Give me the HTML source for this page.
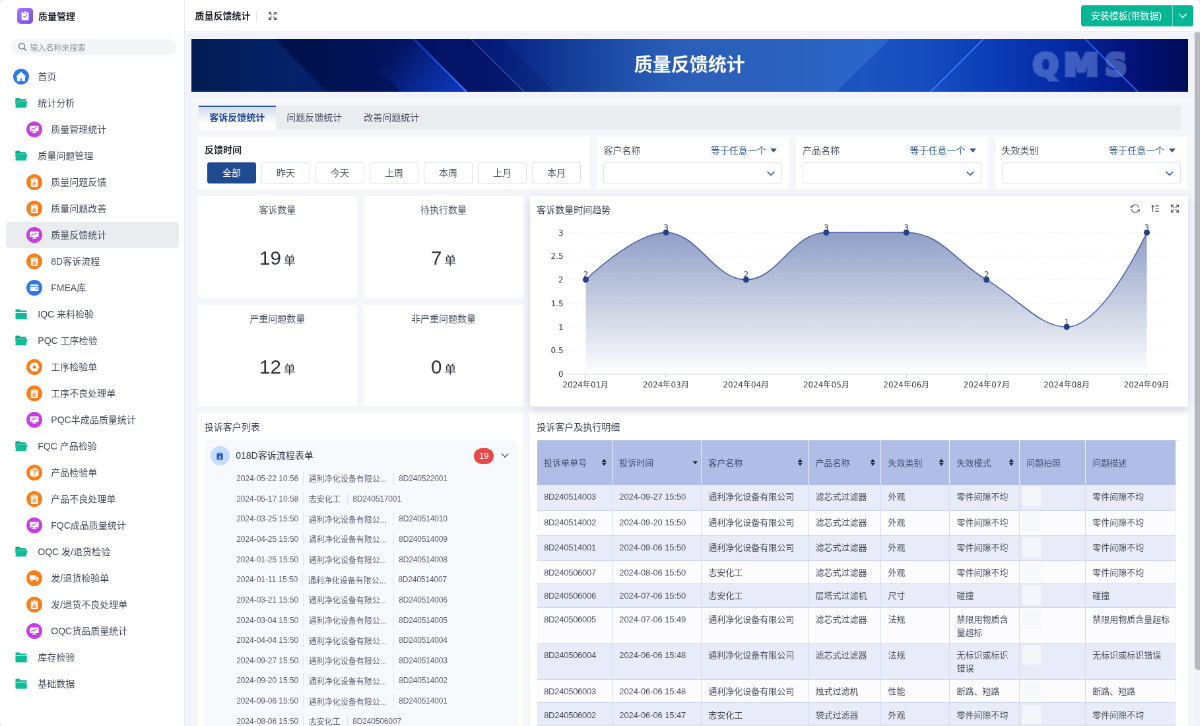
<!DOCTYPE html>
<html lang="zh-CN"><head><meta charset="utf-8"><title>质量反馈统计</title>
<style>
*{box-sizing:border-box;margin:0;padding:0}
html,body{width:1200px;height:726px;overflow:hidden;background:#efefef}
body{font-family:"Liberation Sans","Noto Sans CJK SC",sans-serif;color:#333a47;font-size:14px}
#app{position:absolute;left:0;top:0;width:1818.18px;height:1100px;transform:scale(.66);transform-origin:0 0;overflow:hidden;background:#fff;will-change:transform;border-radius:9px}
i,em{font-style:normal}
/* sidebar */
#side{position:absolute;left:0;top:0;width:280px;height:1100px;background:#fff;border-right:1px solid #e9ebf0}
.logo{position:absolute;left:26px;top:12px;height:24px;display:flex;align-items:center}
.logo .lg{width:24px;height:24px;border-radius:5px;background:linear-gradient(135deg,#a97bf5,#7a4be8);display:block;margin-right:8px}
.logo b{font-size:14px;color:#1f2329;letter-spacing:0}
.search{position:absolute;left:16.5px;top:59px;width:250px;height:24px;border-radius:12px;background:#f4f5f7;display:flex;align-items:center;padding-left:10px;font-size:12px;color:#8d929c}
.search svg{margin-right:5px}
.menu{position:absolute;left:8.5px;top:96px;width:262.5px}
.mi{height:40px;display:flex;align-items:center;padding-left:11.5px;border-radius:5px;color:#434a58;font-size:14px}
.mi.l1{padding-left:31.5px}
.mi.cur{background:#eaecf0}
.mi>span:last-child{margin-left:13.3px;position:relative;top:-1.2px}
.ci{width:24px;height:24px;border-radius:50%;display:block;flex:none}
.ci svg{display:block}
.fi{width:24px;height:24px;display:flex;align-items:center;justify-content:center;flex:none}
/* top */
#top{position:absolute;left:280px;top:0;right:0;height:48px;background:#fff;border-bottom:1px solid #eceef2}
#top .tt{position:absolute;left:15.5px;top:0;line-height:48px;font-size:14px;color:#1f2329}
#top .sep{position:absolute;left:108px;top:15px;width:1px;height:18px;background:#e3e5ea}
#top .fs{position:absolute;left:125.5px;top:17px}
.ibtn{position:absolute;left:1357.5px;top:8px;height:32px;width:170.5px;background:#03b696;border-radius:4px;color:#fff;display:flex;font-size:14px}
.ibtn .a{width:139px;text-align:center;line-height:33.5px;border-right:1px solid rgba(255,255,255,.45)}
.ibtn .b{flex:1;display:flex;align-items:center;justify-content:center}
/* main */
#main{position:absolute;left:280px;top:49px;right:0;bottom:0;background:#f2f3f8}
#main>*{position:absolute}
#banner{left:9.7px;top:9.8px;width:1510px;height:80px;overflow:hidden}
#banner svg{display:block}
#banner .bt{position:absolute;left:0;right:0;top:0;line-height:80px;text-align:center;color:#fff;font-size:28px;font-weight:bold;letter-spacing:0}
#panel{left:9.7px;top:99.5px;width:1520px;height:960px;background:#f5f6fa;border-radius:3px}
.tabs{position:absolute;left:11px;top:11.5px;width:1488px;height:37px;background:#ebecf0;display:flex}
.tab{width:117px;text-align:center;line-height:36.5px;font-size:14px;color:#4a5060}
.tab.act{background:linear-gradient(#d3dbea,#fff 72%);border-top:2px solid #2b5797;color:#1f4a8f;font-weight:bold;line-height:33px}
.card{background:#fff;margin-left:-280px;margin-top:-49px;overflow:hidden}
.ct{position:absolute;left:10px;top:10px;font-size:14px;line-height:22px;color:#3a4150}
/* filters */
.flab{position:absolute;left:10px;right:10px;top:9px;height:24px;line-height:24px;display:flex;justify-content:space-between;font-size:14px;color:#4e5562}
.flab b{color:#1f2329;position:relative;top:-.8px}
.flab em{color:#2f5a9e;margin-right:8px}
.tri{display:inline-block;border:5px solid transparent;border-top:6.5px solid #2f5597;border-bottom:0;margin-left:6.5px;vertical-align:1.5px}
.btns{position:absolute;left:14px;top:39px;display:flex}
.tb{width:74px;height:32px;border:1px solid #dcdfe6;border-radius:3px;margin-right:8px;text-align:center;line-height:30px;font-size:14px;color:#4a5060;background:#fff}
.tb.on{background:#1f4a8f;border-color:#1f4a8f;color:#fff}
.sel{position:absolute;left:10px;right:10px;top:39px;height:33px;border:1px solid #dcdfe6;border-radius:4px}
.sel .chev{position:absolute;right:9px;top:9px}
/* stats */
.stat .st{position:absolute;left:0;right:0;top:10px;text-align:center;font-size:14px;line-height:22px;color:#4e5562}
.stat .sn{position:absolute;left:0;right:0;top:74px;text-align:center;line-height:40px;color:#2b303b;white-space:nowrap}
.stat .sn span{font-size:29.5px}
.stat .sn small{font-size:18px}
/* chart */
.chartc{box-shadow:0 4px 14px rgba(60,50,120,.18);overflow:visible;z-index:2}
.chart{position:absolute;left:0;top:0}
.axl{font-family:"DejaVu Sans","Liberation Sans",sans-serif;font-size:12px;fill:#333a47}
.dl{font-family:"DejaVu Sans","Liberation Sans",sans-serif;font-size:12px;fill:#333a47}
.tools{position:absolute;right:12.5px;top:12px;display:flex}
.tools svg{margin-left:16px;display:block}
/* list */
.lbox{position:absolute;left:10.5px;top:41px;right:10px;bottom:0;background:#f8f9fc;border-radius:6px}
.lh{height:48px;position:relative}
.lic{position:absolute;left:9px;top:9.5px;width:28.5px;height:28.5px;border-radius:50%;background:#c6dcfb;display:flex;align-items:center;justify-content:center}
.lt{position:absolute;left:47px;top:0;line-height:47px;font-size:14px;color:#2d3340}
.bdg{position:absolute;left:408px;top:12.2px;width:30px;height:24px;border-radius:12px;background:#e84a4a;color:#fff;font-size:13px;text-align:center;line-height:24px}
.lchev{position:absolute;left:448px;top:16.5px}
.lr{height:30.67px;display:flex;align-items:center;padding-left:48px;font-size:12px;color:#5a6170;white-space:nowrap;position:relative;top:-5.3px}
.lr i{width:1px;height:20px;background:#e1e3e9;margin:0 7.5px 0 7px}
.lr .n{letter-spacing:-.05px}
.lr .n2{letter-spacing:-.15px}
.lr .co{max-width:121px;overflow:hidden;text-overflow:ellipsis;padding-right:3px}
/* table */
.tw{position:absolute;left:10.3px;top:41px;width:968px}
.thead{display:flex;height:67.8px;background:#b0bde6}
.th{height:100%;border-right:1.4px solid #f3f5fc;display:flex;align-items:center;justify-content:space-between;padding:0 7px 1px 10.5px;font-size:13px;color:#434d6e;flex:none}
.so1{margin-right:-3px}
.th:last-child{border-right:0}
.tr{display:flex;border-bottom:1px solid #d0d6f3}
.tr.odd{background:#e9ecf8}
.tr.even{background:#fcfcfe}
.td{flex:none;border-right:1px solid #d3d9f2;padding:8.4px 10.5px 0;font-size:13px;line-height:20px;color:#4a5060;position:relative}
.td.c0{letter-spacing:-.25px}
.td.c1{letter-spacing:-.11px}
.td:last-child{border-right:0;padding-right:0;white-space:nowrap}
.td.ph u{position:absolute;left:4px;top:3.5px;width:28px;height:28.5px;border-radius:3px;background:#f7f8fc;opacity:.85}
.tr.even .td.ph u{background:#f6f7fa}
.tsb{position:absolute;left:977.3px;top:41px;width:9.2px;bottom:0;background:#fff;border:1px solid #eceef9;border-bottom:0}
/* page scrollbar */
#vsb{position:absolute;left:1809.6px;top:49px;width:9px;height:966px;background:#b7b9be;border-radius:2px 0 0 5px}

</style></head><body><div id="app">
<div id="side"><div class="logo"><span class="lg"><svg viewBox="0 0 24 24" width="24" height="24"><path d="M7.6 6.6h8.8a1 1 0 0 1 1 1v10a1 1 0 0 1-1 1H7.6a1 1 0 0 1-1-1v-10a1 1 0 0 1 1-1z" fill="#fff"/><rect x="9.4" y="5" width="5.2" height="3" rx=".8" fill="#fff" stroke="#8d5cf0" stroke-width=".8"/><path d="M9.6 12.6l1.8 1.8 3.2-3.2" stroke="#8d5cf0" stroke-width="1.3" fill="none" stroke-linecap="round" stroke-linejoin="round"/></svg></span><b>质量管理</b></div><div class="search"><svg viewBox="0 0 14 14" width="14" height="14"><circle cx="6" cy="6" r="4.4" stroke="#5a6070" stroke-width="1.3" fill="none"/><path d="M9.3 9.3l3 3" stroke="#5a6070" stroke-width="1.4" stroke-linecap="round"/></svg><span>输入名称来搜索</span></div><div class="menu"><div class="mi l0"><span class="ci" style="background:#2c7be8"><svg viewBox="0 0 24 24" width="24" height="24"><path d="M12 4.900l7.400 7.100h-1.900v6.800h-4.200v-4.600h-2.700v4.600H6.300V12H4.500z" fill="#fff" stroke="#fff" stroke-width=".6" stroke-linejoin="round"/></svg></span><span>首页</span></div><div class="mi l0"><span class="fi"><svg viewBox="0 0 18 18" width="20" height="20"><path d="M1.2 3.2a1 1 0 0 1 1-1h4.3l1.6 1.7h6.5a1 1 0 0 1 1 1v1.2H3.4L1.2 12z" fill="#0aa884"/><path d="M3.6 6.6h13.2a.7.7 0 0 1 .7.9l-1.7 7.3a1 1 0 0 1-1 .8H1.9a.7.7 0 0 1-.7-.9l1.6-7.4a.9.9 0 0 1 .8-.7z" fill="#0fbc96"/></svg></span><span>统计分析</span></div><div class="mi l1"><span class="ci" style="background:#c83de0"><svg viewBox="0 0 24 24" width="24" height="24"><rect x="5.200" y="6.800" width="13.400" height="8.300" rx="1" fill="#fff"/><path d="M7.600 12.700l2.300-2.300 1.700 1.400 2.300-2.500h2" stroke="#c83de0" stroke-width="1.100" fill="none" stroke-linecap="round" stroke-linejoin="round"/><rect x="10.800" y="15" width="2.400" height="1.500" fill="#fff"/><rect x="8.500" y="16.200" width="7" height="1.250" rx=".5" fill="#fff"/></svg></span><span>质量管理统计</span></div><div class="mi l0"><span class="fi"><svg viewBox="0 0 18 18" width="20" height="20"><path d="M1.2 3.2a1 1 0 0 1 1-1h4.3l1.6 1.7h6.5a1 1 0 0 1 1 1v1.2H3.4L1.2 12z" fill="#0aa884"/><path d="M3.6 6.6h13.2a.7.7 0 0 1 .7.9l-1.7 7.3a1 1 0 0 1-1 .8H1.9a.7.7 0 0 1-.7-.9l1.6-7.4a.9.9 0 0 1 .8-.7z" fill="#0fbc96"/></svg></span><span>质量问题管理</span></div><div class="mi l1"><span class="ci" style="background:#fb7d17"><svg viewBox="0 0 24 24" width="24" height="24"><path d="M7.6 6.6h8.8a.9.9 0 0 1 .9.9v10.6a.9.9 0 0 1-.9.9H7.6a.9.9 0 0 1-.9-.9V7.500a.9.9 0 0 1 .9-.9z" fill="#fff"/><rect x="9.500" y="5" width="5" height="2.800" rx=".8" fill="#fff" stroke="#fb7d17" stroke-width=".8"/><path d="M12 9.800l2.900 5.600H9.100z" fill="#fb7d17"/><rect x="11.650" y="11.800" width=".7" height="3.600" fill="#fff"/><rect x="9.100" y="16.200" width="5.800" height=".9" fill="#fb7d17"/></svg></span><span>质量问题反馈</span></div><div class="mi l1"><span class="ci" style="background:#fb7d17"><svg viewBox="0 0 24 24" width="24" height="24"><path d="M7.6 6.6h8.8a.9.9 0 0 1 .9.9v10.6a.9.9 0 0 1-.9.9H7.6a.9.9 0 0 1-.9-.9V7.500a.9.9 0 0 1 .9-.9z" fill="#fff"/><rect x="9.500" y="5" width="5" height="2.800" rx=".8" fill="#fff" stroke="#fb7d17" stroke-width=".8"/><path d="M12 9.800l2.900 5.600H9.100z" fill="#fb7d17"/><rect x="11.650" y="11.800" width=".7" height="3.600" fill="#fff"/><rect x="9.100" y="16.200" width="5.800" height=".9" fill="#fb7d17"/></svg></span><span>质量问题改善</span></div><div class="mi l1 cur"><span class="ci" style="background:#c83de0"><svg viewBox="0 0 24 24" width="24" height="24"><rect x="5.200" y="6.800" width="13.400" height="8.300" rx="1" fill="#fff"/><path d="M7.600 12.700l2.300-2.300 1.700 1.400 2.300-2.500h2" stroke="#c83de0" stroke-width="1.100" fill="none" stroke-linecap="round" stroke-linejoin="round"/><rect x="10.800" y="15" width="2.400" height="1.500" fill="#fff"/><rect x="8.500" y="16.200" width="7" height="1.250" rx=".5" fill="#fff"/></svg></span><span>质量反馈统计</span></div><div class="mi l1"><span class="ci" style="background:#fb7d17"><svg viewBox="0 0 24 24" width="24" height="24"><path d="M7.6 6.6h8.8a.9.9 0 0 1 .9.9v10.6a.9.9 0 0 1-.9.9H7.6a.9.9 0 0 1-.9-.9V7.500a.9.9 0 0 1 .9-.9z" fill="#fff"/><rect x="9.500" y="5" width="5" height="2.800" rx=".8" fill="#fff" stroke="#fb7d17" stroke-width=".8"/><path d="M12 9.800l2.900 5.600H9.100z" fill="#fb7d17"/><rect x="11.650" y="11.800" width=".7" height="3.600" fill="#fff"/><rect x="9.100" y="16.200" width="5.800" height=".9" fill="#fb7d17"/></svg></span><span>8D客诉流程</span></div><div class="mi l1"><span class="ci" style="background:#2c7be8"><svg viewBox="0 0 24 24" width="24" height="24"><rect x="5.600" y="7" width="12.800" height="10" rx="1.500" fill="#fff"/><rect x="5.600" y="9.300" width="12.800" height="1.400" fill="#2c7be8"/><rect x="14" y="12.800" width="2.600" height="1.800" rx=".4" fill="#2c7be8"/></svg></span><span>FMEA库</span></div><div class="mi l0"><span class="fi"><svg viewBox="0 0 18 18" width="20" height="20"><path d="M1.3 3.4a1.1 1.1 0 0 1 1.1-1.1h4.4l1.6 1.8h7.3a1.1 1.1 0 0 1 1.1 1.1v1.1H1.3z" fill="#0fbc96"/><path d="M1.3 7.2h15.5v7.4a1.1 1.1 0 0 1-1.1 1.1H2.4a1.1 1.1 0 0 1-1.1-1.1z" fill="#0fbc96"/></svg></span><span>IQC 来料检验</span></div><div class="mi l0"><span class="fi"><svg viewBox="0 0 18 18" width="20" height="20"><path d="M1.2 3.2a1 1 0 0 1 1-1h4.3l1.6 1.7h6.5a1 1 0 0 1 1 1v1.2H3.4L1.2 12z" fill="#0aa884"/><path d="M3.6 6.6h13.2a.7.7 0 0 1 .7.9l-1.7 7.3a1 1 0 0 1-1 .8H1.9a.7.7 0 0 1-.7-.9l1.6-7.4a.9.9 0 0 1 .8-.7z" fill="#0fbc96"/></svg></span><span>PQC 工序检验</span></div><div class="mi l1"><span class="ci" style="background:#fb7d17"><svg viewBox="0 0 24 24" width="24" height="24"><path d="M8.600 5.400h6.800a1 1 0 0 1 .85.5l3.100 5.600a1 1 0 0 1 0 1l-3.100 5.600a1 1 0 0 1-.85.5H8.600a1 1 0 0 1-.85-.5l-3.100-5.600a1 1 0 0 1 0-1l3.100-5.600a1 1 0 0 1 .85-.5z" fill="#fff"/><circle cx="12" cy="12" r="2.500" fill="#fb7d17"/></svg></span><span>工序检验单</span></div><div class="mi l1"><span class="ci" style="background:#fb7d17"><svg viewBox="0 0 24 24" width="24" height="24"><path d="M7.6 6.6h8.8a.9.9 0 0 1 .9.9v10.6a.9.9 0 0 1-.9.9H7.6a.9.9 0 0 1-.9-.9V7.500a.9.9 0 0 1 .9-.9z" fill="#fff"/><rect x="9.500" y="5" width="5" height="2.800" rx=".8" fill="#fff" stroke="#fb7d17" stroke-width=".8"/><path d="M12 9.800l2.900 5.600H9.100z" fill="#fb7d17"/><rect x="11.650" y="11.800" width=".7" height="3.600" fill="#fff"/><rect x="9.100" y="16.200" width="5.800" height=".9" fill="#fb7d17"/></svg></span><span>工序不良处理单</span></div><div class="mi l1"><span class="ci" style="background:#c83de0"><svg viewBox="0 0 24 24" width="24" height="24"><rect x="5.200" y="6.800" width="13.400" height="8.300" rx="1" fill="#fff"/><path d="M7.600 12.700l2.300-2.300 1.700 1.400 2.300-2.500h2" stroke="#c83de0" stroke-width="1.100" fill="none" stroke-linecap="round" stroke-linejoin="round"/><rect x="10.800" y="15" width="2.400" height="1.500" fill="#fff"/><rect x="8.500" y="16.200" width="7" height="1.250" rx=".5" fill="#fff"/></svg></span><span>PQC半成品质量统计</span></div><div class="mi l0"><span class="fi"><svg viewBox="0 0 18 18" width="20" height="20"><path d="M1.2 3.2a1 1 0 0 1 1-1h4.3l1.6 1.7h6.5a1 1 0 0 1 1 1v1.2H3.4L1.2 12z" fill="#0aa884"/><path d="M3.6 6.6h13.2a.7.7 0 0 1 .7.9l-1.7 7.3a1 1 0 0 1-1 .8H1.9a.7.7 0 0 1-.7-.9l1.6-7.4a.9.9 0 0 1 .8-.7z" fill="#0fbc96"/></svg></span><span>FQC 产品检验</span></div><div class="mi l1"><span class="ci" style="background:#fb7d17"><svg viewBox="0 0 24 24" width="24" height="24"><path d="M12 4.600l6.500 2.700v9.200L12 19.400l-6.500-2.900V7.300z" fill="#fff"/><path d="M5.800 7.600L12 10.300l6.200-2.700M12 10.300v8.700M8.700 6.100l6.300 2.800v3" stroke="#fb7d17" stroke-width="1" fill="none"/></svg></span><span>产品检验单</span></div><div class="mi l1"><span class="ci" style="background:#fb7d17"><svg viewBox="0 0 24 24" width="24" height="24"><path d="M7.6 6.6h8.8a.9.9 0 0 1 .9.9v10.6a.9.9 0 0 1-.9.9H7.6a.9.9 0 0 1-.9-.9V7.500a.9.9 0 0 1 .9-.9z" fill="#fff"/><rect x="9.500" y="5" width="5" height="2.800" rx=".8" fill="#fff" stroke="#fb7d17" stroke-width=".8"/><path d="M12 9.800l2.900 5.600H9.100z" fill="#fb7d17"/><rect x="11.650" y="11.800" width=".7" height="3.600" fill="#fff"/><rect x="9.100" y="16.200" width="5.800" height=".9" fill="#fb7d17"/></svg></span><span>产品不良处理单</span></div><div class="mi l1"><span class="ci" style="background:#c83de0"><svg viewBox="0 0 24 24" width="24" height="24"><rect x="5.200" y="6.800" width="13.400" height="8.300" rx="1" fill="#fff"/><path d="M7.600 12.700l2.300-2.300 1.700 1.400 2.300-2.500h2" stroke="#c83de0" stroke-width="1.100" fill="none" stroke-linecap="round" stroke-linejoin="round"/><rect x="10.800" y="15" width="2.400" height="1.500" fill="#fff"/><rect x="8.500" y="16.200" width="7" height="1.250" rx=".5" fill="#fff"/></svg></span><span>FQC成品质量统计</span></div><div class="mi l0"><span class="fi"><svg viewBox="0 0 18 18" width="20" height="20"><path d="M1.2 3.2a1 1 0 0 1 1-1h4.3l1.6 1.7h6.5a1 1 0 0 1 1 1v1.2H3.4L1.2 12z" fill="#0aa884"/><path d="M3.6 6.6h13.2a.7.7 0 0 1 .7.9l-1.7 7.3a1 1 0 0 1-1 .8H1.9a.7.7 0 0 1-.7-.9l1.6-7.4a.9.9 0 0 1 .8-.7z" fill="#0fbc96"/></svg></span><span>OQC 发/退货检验</span></div><div class="mi l1"><span class="ci" style="background:#fb7d17"><svg viewBox="0 0 24 24" width="24" height="24"><path d="M5.700 7.300h7.300a.8.800 0 0 1 .8.800v7H4.900v-7a.8.800 0 0 1 .8-.8z" fill="#fff"/><path d="M14.500 9.400h2.300l1.900 2.700v3h-4.200z" fill="#fff"/><circle cx="8" cy="15.600" r="1.700" fill="#fff" stroke="#fb7d17" stroke-width=".9"/><circle cx="15.900" cy="15.600" r="1.700" fill="#fff" stroke="#fb7d17" stroke-width=".9"/></svg></span><span>发/退货检验单</span></div><div class="mi l1"><span class="ci" style="background:#fb7d17"><svg viewBox="0 0 24 24" width="24" height="24"><path d="M7.6 6.6h8.8a.9.9 0 0 1 .9.9v10.6a.9.9 0 0 1-.9.9H7.6a.9.9 0 0 1-.9-.9V7.500a.9.9 0 0 1 .9-.9z" fill="#fff"/><rect x="9.500" y="5" width="5" height="2.800" rx=".8" fill="#fff" stroke="#fb7d17" stroke-width=".8"/><path d="M12 9.800l2.900 5.600H9.100z" fill="#fb7d17"/><rect x="11.650" y="11.800" width=".7" height="3.600" fill="#fff"/><rect x="9.100" y="16.200" width="5.800" height=".9" fill="#fb7d17"/></svg></span><span>发/退货不良处理单</span></div><div class="mi l1"><span class="ci" style="background:#c83de0"><svg viewBox="0 0 24 24" width="24" height="24"><rect x="5.200" y="6.800" width="13.400" height="8.300" rx="1" fill="#fff"/><path d="M7.600 12.700l2.300-2.300 1.700 1.400 2.300-2.500h2" stroke="#c83de0" stroke-width="1.100" fill="none" stroke-linecap="round" stroke-linejoin="round"/><rect x="10.800" y="15" width="2.400" height="1.500" fill="#fff"/><rect x="8.500" y="16.200" width="7" height="1.250" rx=".5" fill="#fff"/></svg></span><span>OQC货品质量统计</span></div><div class="mi l0"><span class="fi"><svg viewBox="0 0 18 18" width="20" height="20"><path d="M1.3 3.4a1.1 1.1 0 0 1 1.1-1.1h4.4l1.6 1.8h7.3a1.1 1.1 0 0 1 1.1 1.1v1.1H1.3z" fill="#0fbc96"/><path d="M1.3 7.2h15.5v7.4a1.1 1.1 0 0 1-1.1 1.1H2.4a1.1 1.1 0 0 1-1.1-1.1z" fill="#0fbc96"/></svg></span><span>库存检验</span></div><div class="mi l0"><span class="fi"><svg viewBox="0 0 18 18" width="20" height="20"><path d="M1.3 3.4a1.1 1.1 0 0 1 1.1-1.1h4.4l1.6 1.8h7.3a1.1 1.1 0 0 1 1.1 1.1v1.1H1.3z" fill="#0fbc96"/><path d="M1.3 7.2h15.5v7.4a1.1 1.1 0 0 1-1.1 1.1H2.4a1.1 1.1 0 0 1-1.1-1.1z" fill="#0fbc96"/></svg></span><span>基础数据</span></div></div></div><div id="top"><b class="tt">质量反馈统计</b><i class="sep"></i>
<svg class="fs" viewBox="0 0 14 14" width="14" height="14"><g stroke="#454c5b" stroke-width="1.25" fill="none"><path d="M1.600 5V1.600H5M9 1.600h3.400V5M12.400 9v3.400H9M5 12.400H1.600V9"/><path d="M1.800 1.800l4.100 4.100M12.200 1.800L8.100 5.900M12.200 12.200L8.100 8.100M1.800 12.200l4.100-4.100"/></g></svg>
<div class="ibtn"><span class="a">安装模板(带数据)</span><span class="b"><svg viewBox="0 0 14 14" width="14" height="14"><path d="M1.8 4.4L7 9.6l5.2-5.2" stroke="#fff" stroke-width="1.7" fill="none" stroke-linecap="round" stroke-linejoin="round"/></svg></span></div></div><div id="main"><div id="banner"><svg width="1510" height="80" viewBox="0 0 1510 80" preserveAspectRatio="none">
<defs>
<linearGradient id="bg" x1="0" y1="0" x2="1" y2="0">
<stop offset="0" stop-color="#031c52"/><stop offset=".1" stop-color="#05226a"/><stop offset=".2" stop-color="#04196c"/><stop offset=".3" stop-color="#061e80"/><stop offset=".375" stop-color="#133c96"/><stop offset=".416" stop-color="#1c4aa5"/><stop offset=".458" stop-color="#2558b2"/><stop offset=".5" stop-color="#2b5fb9"/><stop offset=".62" stop-color="#2c63c0"/><stop offset=".68" stop-color="#2a67cc"/><stop offset=".74" stop-color="#2059c6"/><stop offset=".8" stop-color="#0e42b8"/><stop offset=".88" stop-color="#06279e"/><stop offset=".94" stop-color="#03137a"/><stop offset="1" stop-color="#020d58"/>
</linearGradient>
<linearGradient id="dk" gradientUnits="userSpaceOnUse" x1="160" y1="0" x2="380" y2="0"><stop offset="0" stop-color="#01083a" stop-opacity=".62"/><stop offset=".55" stop-color="#01083a" stop-opacity=".35"/><stop offset="1" stop-color="#01083a" stop-opacity="0"/></linearGradient>
<linearGradient id="gl" gradientUnits="userSpaceOnUse" x1="330" y1="0" x2="400" y2="80"><stop offset="0" stop-color="#1446e0" stop-opacity="0"/><stop offset="1" stop-color="#1446e0" stop-opacity=".6"/></linearGradient>
<linearGradient id="l1" x1="0" y1="0" x2="1" y2="1"><stop offset="0" stop-color="#1c4fe8" stop-opacity=".55"/><stop offset="1" stop-color="#3a72ff"/></linearGradient>
</defs>
<rect width="1510" height="80" fill="url(#bg)"/>
<polygon points="127,0 337,0 417,80 205,80" fill="url(#dk)"/>
<polygon points="237,0 337,0 417,80 317,80" fill="url(#gl)"/>
<polygon points="337,0 424,0 504,80 417,80" fill="#020a52" opacity=".45"/>
<polygon points="424,0 470,0 550,80 504,80" fill="#020a52" opacity=".15"/>
<polygon points="1059,0 1200,0 1120,80 977,80" fill="#0636b0" opacity=".38"/>
<polygon points="1120,80 1200,0 1354,0 1434,80" fill="#0633b4" opacity=".22"/>
<path d="M337 0L417 80" stroke="url(#l1)" stroke-width="2.6"/>
<path d="M424 0L504 80" stroke="#8497e2" stroke-opacity=".45" stroke-width="1.3"/>
<path d="M1200 0L1120 80" stroke="#2f7cff" stroke-width="2"/>
<path d="M1354 0L1434 80" stroke="#2460f5" stroke-width="2"/>
<g font-family="'DejaVu Sans','Liberation Sans',sans-serif" font-weight="bold" font-size="45" text-anchor="middle" stroke-linejoin="miter" stroke-miterlimit="3">
<g opacity=".2"><text y="55.200" fill="#c4d2fa" stroke="#c4d2fa" stroke-width="6.400" aria-hidden="true"><tspan x="1294.500">Q</tspan><tspan x="1348.200" textLength="52" lengthAdjust="spacingAndGlyphs">M</tspan><tspan x="1401">S</tspan></text></g>
<g opacity=".3"><text y="55.200" fill="#6a8ee6" stroke="#6a8ee6" stroke-width="4"><tspan x="1294.500">Q</tspan><tspan x="1348.200" textLength="52" lengthAdjust="spacingAndGlyphs">M</tspan><tspan x="1401">S</tspan></text></g>
</g>
</svg><div class="bt">质量反馈统计</div></div><div id="panel"><div class="tabs"><span class="tab act">客诉反馈统计</span><span class="tab">问题反馈统计</span><span class="tab">改善问题统计</span></div></div><div class="card f1" style="left:300.0px;top:206.7px;width:593.9px;height:79.5px"><div class="flab"><b>反馈时间</b></div><div class="btns"><span class="tb on">全部</span><span class="tb">昨天</span><span class="tb">今天</span><span class="tb">上周</span><span class="tb">本周</span><span class="tb">上月</span><span class="tb">本月</span></div></div><div class="card f2" style="left:904.2px;top:206.7px;width:291.2px;height:79.5px"><div class="flab"><span>客户名称</span><em>等于任意一个<i class="tri"></i></em></div><div class="sel"><svg class="chev" viewBox="0 0 14 14" width="14" height="14"><path d="M2.2 4.6L7 9.4l4.8-4.8" stroke="#2f5597" stroke-width="1.5" fill="none" stroke-linecap="round" stroke-linejoin="round"/></svg></div></div><div class="card f2" style="left:1205.9px;top:206.7px;width:291.2px;height:79.5px"><div class="flab"><span>产品名称</span><em>等于任意一个<i class="tri"></i></em></div><div class="sel"><svg class="chev" viewBox="0 0 14 14" width="14" height="14"><path d="M2.2 4.6L7 9.4l4.8-4.8" stroke="#2f5597" stroke-width="1.5" fill="none" stroke-linecap="round" stroke-linejoin="round"/></svg></div></div><div class="card f2" style="left:1507.6px;top:206.7px;width:291.2px;height:79.5px"><div class="flab"><span>失效类别</span><em>等于任意一个<i class="tri"></i></em></div><div class="sel"><svg class="chev" viewBox="0 0 14 14" width="14" height="14"><path d="M2.2 4.6L7 9.4l4.8-4.8" stroke="#2f5597" stroke-width="1.5" fill="none" stroke-linecap="round" stroke-linejoin="round"/></svg></div></div><div class="card stat" style="left:299.7px;top:297.0px;width:241.4px;height:153.9px"><div class="st">客诉数量</div><div class="sn"><span>19</span> <small>单</small></div></div><div class="card stat" style="left:551.4px;top:297.0px;width:241.4px;height:153.9px"><div class="st">待执行数量</div><div class="sn"><span>7</span> <small>单</small></div></div><div class="card stat" style="left:299.7px;top:461.5px;width:241.4px;height:153.9px"><div class="st">严重问题数量</div><div class="sn"><span>12</span> <small>单</small></div></div><div class="card stat" style="left:551.4px;top:461.5px;width:241.4px;height:153.9px"><div class="st">非严重问题数量</div><div class="sn"><span>0</span> <small>单</small></div></div><div class="card chartc" style="left:803.3px;top:297.0px;width:996.4px;height:318.5px"><div class="ct">客诉数量时间趋势</div><div class="tools">
<svg viewBox="0 0 14 14" width="14" height="14"><g stroke="#454c5b" stroke-width="1.2" fill="none" stroke-linecap="round"><path d="M12.500 5.400A5.700 5.700 0 0 0 2 4.200"/><path d="M1.500 8.600A5.700 5.700 0 0 0 12 9.800"/></g><path d="M-.2 6l.6-3.600 3.200 2.400zM14.200 8l-.6 3.600-3.200-2.400z" fill="#454c5b"/></svg>
<svg viewBox="0 0 14 14" width="14" height="14"><g stroke="#454c5b" stroke-width="1.2" fill="none"><path d="M3.500 11.800V3.200"/><path d="M7.300 2.800h5.700M7.300 7h5.700M7.300 11.200h5.700"/></g><path d="M3.500 1.200L6 4.600H1z" fill="#454c5b"/></svg>
<svg viewBox="0 0 14 14" width="14" height="14"><g stroke="#454c5b" stroke-width="1.25" fill="none"><path d="M1.600 5V1.600H5M9 1.600h3.400V5M12.400 9v3.400H9M5 12.400H1.600V9"/><path d="M1.800 1.800l4.100 4.100M12.200 1.800L8.100 5.900M12.200 12.200L8.100 8.100M1.800 12.200l4.100-4.100"/></g></svg>
</div><svg class="chart" width="996.4" height="318.5" viewBox="0 0 996.4 318.5"><defs><linearGradient id="ag" x1="0" y1="0" x2="0" y2="1"><stop offset="0" stop-color="#24408e" stop-opacity=".5"/><stop offset="1" stop-color="#24408e" stop-opacity="0"/></linearGradient></defs><text x="50.6" y="274.1" text-anchor="end" class="axl">0</text><path d="M54.2 234.1H965.2" stroke="#eaecf0" stroke-width="1" stroke-dasharray="3 3.4"/><text x="50.6" y="238.4" text-anchor="end" class="axl">0.5</text><path d="M54.2 198.3H965.2" stroke="#eaecf0" stroke-width="1" stroke-dasharray="3 3.4"/><text x="50.6" y="202.6" text-anchor="end" class="axl">1</text><path d="M54.2 162.6H965.2" stroke="#eaecf0" stroke-width="1" stroke-dasharray="3 3.4"/><text x="50.6" y="166.9" text-anchor="end" class="axl">1.5</text><path d="M54.2 126.8H965.2" stroke="#eaecf0" stroke-width="1" stroke-dasharray="3 3.4"/><text x="50.6" y="131.1" text-anchor="end" class="axl">2</text><path d="M54.2 91.1H965.2" stroke="#eaecf0" stroke-width="1" stroke-dasharray="3 3.4"/><text x="50.6" y="95.4" text-anchor="end" class="axl">2.5</text><path d="M54.2 55.3H965.2" stroke="#eaecf0" stroke-width="1" stroke-dasharray="3 3.4"/><text x="50.6" y="59.6" text-anchor="end" class="axl">3</text><path d="M54.2 269.8H965.2" stroke="#d3d5db" stroke-width="1"/><path d="M84.5 269.8v5" stroke="#c0c3ca" stroke-width="1"/><text x="84.5" y="289.8" text-anchor="middle" class="axl">2024年01月</text><path d="M206.0 269.8v5" stroke="#c0c3ca" stroke-width="1"/><text x="206.0" y="289.8" text-anchor="middle" class="axl">2024年03月</text><path d="M327.4 269.8v5" stroke="#c0c3ca" stroke-width="1"/><text x="327.4" y="289.8" text-anchor="middle" class="axl">2024年04月</text><path d="M448.9 269.8v5" stroke="#c0c3ca" stroke-width="1"/><text x="448.9" y="289.8" text-anchor="middle" class="axl">2024年05月</text><path d="M570.3 269.8v5" stroke="#c0c3ca" stroke-width="1"/><text x="570.3" y="289.8" text-anchor="middle" class="axl">2024年06月</text><path d="M691.7 269.8v5" stroke="#c0c3ca" stroke-width="1"/><text x="691.7" y="289.8" text-anchor="middle" class="axl">2024年07月</text><path d="M813.2 269.8v5" stroke="#c0c3ca" stroke-width="1"/><text x="813.2" y="289.8" text-anchor="middle" class="axl">2024年08月</text><path d="M934.6 269.8v5" stroke="#c0c3ca" stroke-width="1"/><text x="934.6" y="289.8" text-anchor="middle" class="axl">2024年09月</text><path d="M84.55 126.82C84.55 126.82 157.41 55.30 205.98 55.30C254.56 55.30 278.85 126.82 327.42 126.82C376.00 126.82 396.68 55.30 448.86 55.30C493.83 55.30 525.34 55.30 570.30 55.30C622.49 55.30 643.17 98.21 691.74 126.82C740.32 155.42 771.51 198.33 813.18 198.33C868.66 198.33 934.62 55.30 934.62 55.30L934.62 269.85L84.55 269.85Z" fill="url(#ag)"/><path d="M84.55 126.82C84.55 126.82 157.41 55.30 205.98 55.30C254.56 55.30 278.85 126.82 327.42 126.82C376.00 126.82 396.68 55.30 448.86 55.30C493.83 55.30 525.34 55.30 570.30 55.30C622.49 55.30 643.17 98.21 691.74 126.82C740.32 155.42 771.51 198.33 813.18 198.33C868.66 198.33 934.62 55.30 934.62 55.30" fill="none" stroke="#4a61a6" stroke-width="1.6"/><circle cx="84.5" cy="126.8" r="4.6" fill="#24408e"/><text x="84.5" y="123.2" text-anchor="middle" class="dl">2</text><circle cx="206.0" cy="55.3" r="4.6" fill="#24408e"/><text x="206.0" y="51.7" text-anchor="middle" class="dl">3</text><circle cx="327.4" cy="126.8" r="4.6" fill="#24408e"/><text x="327.4" y="123.2" text-anchor="middle" class="dl">2</text><circle cx="448.9" cy="55.3" r="4.6" fill="#24408e"/><text x="448.9" y="51.7" text-anchor="middle" class="dl">3</text><circle cx="570.3" cy="55.3" r="4.6" fill="#24408e"/><text x="570.3" y="51.7" text-anchor="middle" class="dl">3</text><circle cx="691.7" cy="126.8" r="4.6" fill="#24408e"/><text x="691.7" y="123.2" text-anchor="middle" class="dl">2</text><circle cx="813.2" cy="198.3" r="4.6" fill="#24408e"/><text x="813.2" y="194.7" text-anchor="middle" class="dl">1</text><circle cx="934.6" cy="55.3" r="4.6" fill="#24408e"/><text x="934.6" y="51.7" text-anchor="middle" class="dl">3</text></svg></div><div class="card listc" style="left:299.7px;top:625.9px;width:493.8px;height:494.1px"><div class="ct">投诉客户列表</div><div class="lbox"><div class="lh"><span class="lic"><svg viewBox="0 0 14 14" width="14" height="14"><rect x="2.4" y="2.6" width="9.2" height="9.8" rx="1.2" fill="#2356c6"/><rect x="4.8" y="1.4" width="4.4" height="2.4" rx=".6" fill="#2356c6" stroke="#c6dcfb" stroke-width=".6"/><path d="M7 6l2 3.4H5z" fill="#c6dcfb"/><rect x="5" y="9.8" width="4" height=".9" fill="#c6dcfb"/></svg></span><span class="lt">018D客诉流程表单</span><span class="bdg">19</span><svg class="lchev" viewBox="0 0 14 14" width="14" height="14"><path d="M2.4 4.8L7 9.4l4.6-4.6" stroke="#5a6170" stroke-width="1.4" fill="none" stroke-linecap="round" stroke-linejoin="round"/></svg></div><div class="lr"><span class="n">2024-05-22 10:56</span><i></i><span class="co">通利净化设备有限公...</span><i></i><span class="n n2">8D240522001</span></div><div class="lr"><span class="n">2024-05-17 10:58</span><i></i><span class="co">志安化工</span><i></i><span class="n n2">8D240517001</span></div><div class="lr"><span class="n">2024-03-25 15:50</span><i></i><span class="co">通利净化设备有限公...</span><i></i><span class="n n2">8D240514010</span></div><div class="lr"><span class="n">2024-04-25 15:50</span><i></i><span class="co">通利净化设备有限公...</span><i></i><span class="n n2">8D240514009</span></div><div class="lr"><span class="n">2024-01-25 15:50</span><i></i><span class="co">通利净化设备有限公...</span><i></i><span class="n n2">8D240514008</span></div><div class="lr"><span class="n">2024-01-11 15:50</span><i></i><span class="co">通利净化设备有限公...</span><i></i><span class="n n2">8D240514007</span></div><div class="lr"><span class="n">2024-03-21 15:50</span><i></i><span class="co">通利净化设备有限公...</span><i></i><span class="n n2">8D240514006</span></div><div class="lr"><span class="n">2024-03-04 15:50</span><i></i><span class="co">通利净化设备有限公...</span><i></i><span class="n n2">8D240514005</span></div><div class="lr"><span class="n">2024-04-04 15:50</span><i></i><span class="co">通利净化设备有限公...</span><i></i><span class="n n2">8D240514004</span></div><div class="lr"><span class="n">2024-09-27 15:50</span><i></i><span class="co">通利净化设备有限公...</span><i></i><span class="n n2">8D240514003</span></div><div class="lr"><span class="n">2024-09-20 15:50</span><i></i><span class="co">通利净化设备有限公...</span><i></i><span class="n n2">8D240514002</span></div><div class="lr"><span class="n">2024-09-06 15:50</span><i></i><span class="co">通利净化设备有限公...</span><i></i><span class="n n2">8D240514001</span></div><div class="lr"><span class="n">2024-08-06 15:50</span><i></i><span class="co">志安化工</span><i></i><span class="n n2">8D240506007</span></div><div class="lr"><span class="n">2024-07-06 15:50</span><i></i><span class="co">志安化工</span><i></i><span class="n n2">8D240506006</span></div></div></div><div class="card tablec" style="left:803.3px;top:625.9px;width:996.4px;height:494.1px"><div class="ct">投诉客户及执行明细</div><div class="tw"><div class="thead"><div class="th" style="width:114.2px"><span>投诉单单号</span><svg class="so" viewBox="0 0 8 12" width="8.600" height="13"><path d="M4 1.2L7.4 5.6H.6z" fill="#1f2430"/><path d="M4 10.8L.6 6.4h6.800z" fill="#1f2430"/></svg></div><div class="th" style="width:134.9px"><span>投诉时间</span><svg class="so so1" viewBox="0 0 8 12" width="8.600" height="13"><path d="M4 8.6L.6 4.4h6.8z" fill="#1f2430"/></svg></div><div class="th" style="width:162.4px"><span>客户名称</span><svg class="so" viewBox="0 0 8 12" width="8.600" height="13"><path d="M4 1.2L7.4 5.6H.6z" fill="#1f2430"/><path d="M4 10.8L.6 6.4h6.800z" fill="#1f2430"/></svg></div><div class="th" style="width:110.0px"><span>产品名称</span><svg class="so" viewBox="0 0 8 12" width="8.600" height="13"><path d="M4 1.2L7.4 5.6H.6z" fill="#1f2430"/><path d="M4 10.8L.6 6.4h6.800z" fill="#1f2430"/></svg></div><div class="th" style="width:104.0px"><span>失效类别</span><svg class="so" viewBox="0 0 8 12" width="8.600" height="13"><path d="M4 1.2L7.4 5.6H.6z" fill="#1f2430"/><path d="M4 10.8L.6 6.4h6.800z" fill="#1f2430"/></svg></div><div class="th" style="width:105.5px"><span>失效模式</span><svg class="so" viewBox="0 0 8 12" width="8.600" height="13"><path d="M4 1.2L7.4 5.6H.6z" fill="#1f2430"/><path d="M4 10.8L.6 6.4h6.800z" fill="#1f2430"/></svg></div><div class="th" style="width:100.2px"><span>问题拍照</span></div><div class="th" style="width:135.8px"><span>问题描述</span></div></div><div class="tr odd tall" style="height:39.2px"><div class="td c0" style="width:114.2px"><span>8D240514003</span></div><div class="td c1" style="width:134.9px"><span>2024-09-27 15:50</span></div><div class="td c2" style="width:162.4px"><span>通利净化设备有限公司</span></div><div class="td c3" style="width:110.0px"><span>滤芯式过滤器</span></div><div class="td c4" style="width:104.0px"><span>外观</span></div><div class="td c5" style="width:105.5px"><span>零件间隙不均</span></div><div class="td ph" style="width:100.2px"><u></u></div><div class="td c7" style="width:135.8px"><span>零件间隙不均</span></div></div><div class="tr even tall" style="height:38.0px"><div class="td c0" style="width:114.2px"><span>8D240514002</span></div><div class="td c1" style="width:134.9px"><span>2024-09-20 15:50</span></div><div class="td c2" style="width:162.4px"><span>通利净化设备有限公司</span></div><div class="td c3" style="width:110.0px"><span>滤芯式过滤器</span></div><div class="td c4" style="width:104.0px"><span>外观</span></div><div class="td c5" style="width:105.5px"><span>零件间隙不均</span></div><div class="td ph" style="width:100.2px"><u></u></div><div class="td c7" style="width:135.8px"><span>零件间隙不均</span></div></div><div class="tr odd tall" style="height:38.2px"><div class="td c0" style="width:114.2px"><span>8D240514001</span></div><div class="td c1" style="width:134.9px"><span>2024-09-06 15:50</span></div><div class="td c2" style="width:162.4px"><span>通利净化设备有限公司</span></div><div class="td c3" style="width:110.0px"><span>滤芯式过滤器</span></div><div class="td c4" style="width:104.0px"><span>外观</span></div><div class="td c5" style="width:105.5px"><span>零件间隙不均</span></div><div class="td ph" style="width:100.2px"><u></u></div><div class="td c7" style="width:135.8px"><span>零件间隙不均</span></div></div><div class="tr even" style="height:34.8px"><div class="td c0" style="width:114.2px"><span>8D240506007</span></div><div class="td c1" style="width:134.9px"><span>2024-08-06 15:50</span></div><div class="td c2" style="width:162.4px"><span>志安化工</span></div><div class="td c3" style="width:110.0px"><span>滤芯式过滤器</span></div><div class="td c4" style="width:104.0px"><span>外观</span></div><div class="td c5" style="width:105.5px"><span>零件间隙不均</span></div><div class="td ph" style="width:100.2px"><u></u></div><div class="td c7" style="width:135.8px"><span>零件间隙不均</span></div></div><div class="tr odd" style="height:35.7px"><div class="td c0" style="width:114.2px"><span>8D240506006</span></div><div class="td c1" style="width:134.9px"><span>2024-07-06 15:50</span></div><div class="td c2" style="width:162.4px"><span>志安化工</span></div><div class="td c3" style="width:110.0px"><span>层塔式过滤机</span></div><div class="td c4" style="width:104.0px"><span>尺寸</span></div><div class="td c5" style="width:105.5px"><span>碰撞</span></div><div class="td ph" style="width:100.2px"><u></u></div><div class="td c7" style="width:135.8px"><span>碰撞</span></div></div><div class="tr even" style="height:54.4px"><div class="td c0" style="width:114.2px"><span>8D240506005</span></div><div class="td c1" style="width:134.9px"><span>2024-07-06 15:49</span></div><div class="td c2" style="width:162.4px"><span>通利净化设备有限公司</span></div><div class="td c3" style="width:110.0px"><span>滤芯式过滤器</span></div><div class="td c4" style="width:104.0px"><span>法规</span></div><div class="td c5" style="width:105.5px"><span>禁限用物质含量超标</span></div><div class="td ph" style="width:100.2px"><u></u></div><div class="td c7" style="width:135.8px"><span>禁限用物质含量超标</span></div></div><div class="tr odd" style="height:54.6px"><div class="td c0" style="width:114.2px"><span>8D240506004</span></div><div class="td c1" style="width:134.9px"><span>2024-06-06 15:48</span></div><div class="td c2" style="width:162.4px"><span>通利净化设备有限公司</span></div><div class="td c3" style="width:110.0px"><span>滤芯式过滤器</span></div><div class="td c4" style="width:104.0px"><span>法规</span></div><div class="td c5" style="width:105.5px"><span>无标识或标识错误</span></div><div class="td ph" style="width:100.2px"><u></u></div><div class="td c7" style="width:135.8px"><span>无标识或标识错误</span></div></div><div class="tr even" style="height:35.6px"><div class="td c0" style="width:114.2px"><span>8D240506003</span></div><div class="td c1" style="width:134.9px"><span>2024-06-06 15:48</span></div><div class="td c2" style="width:162.4px"><span>通利净化设备有限公司</span></div><div class="td c3" style="width:110.0px"><span>烛式过滤机</span></div><div class="td c4" style="width:104.0px"><span>性能</span></div><div class="td c5" style="width:105.5px"><span>断路、短路</span></div><div class="td ph" style="width:100.2px"><u></u></div><div class="td c7" style="width:135.8px"><span>断路、短路</span></div></div><div class="tr odd" style="height:35.3px"><div class="td c0" style="width:114.2px"><span>8D240506002</span></div><div class="td c1" style="width:134.9px"><span>2024-06-06 15:47</span></div><div class="td c2" style="width:162.4px"><span>志安化工</span></div><div class="td c3" style="width:110.0px"><span>袋式过滤器</span></div><div class="td c4" style="width:104.0px"><span>外观</span></div><div class="td c5" style="width:105.5px"><span>零件间隙不均</span></div><div class="td ph" style="width:100.2px"><u></u></div><div class="td c7" style="width:135.8px"><span>零件间隙不均</span></div></div></div><div class="tsb"></div></div></div><div id="vsb"></div>
</div></body></html>
